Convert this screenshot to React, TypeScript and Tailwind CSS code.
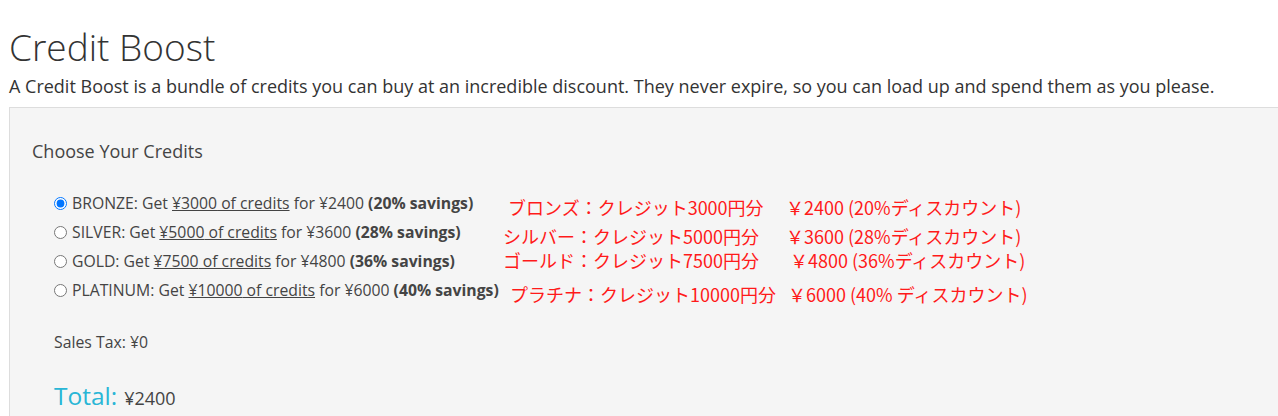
import React from 'react';

const OPTIONS = [
  { id: 'bronze', name: 'BRONZE', credits: '¥3000', price: '¥2400', savings: '20%', checked: true },
  { id: 'silver', name: 'SILVER', credits: '¥5000', price: '¥3600', savings: '28%' },
  { id: 'gold', name: 'GOLD', credits: '¥7500', price: '¥4800', savings: '36%' },
  { id: 'platinum', name: 'PLATINUM', credits: '¥10000', price: '¥6000', savings: '40%' },
];

// red notes drawn over the form
const NOTES = [
  { label: 'ブロンズ：クレジット3000円分', price: '￥2400 (20%ディスカウント)', cls: 'top-[195px] left-[508px]', priceCls: 'left-[786px]' },
  { label: 'シルバー：クレジット5000円分', price: '￥3600 (28%ディスカウント)', cls: 'top-[224px] left-[503px]', priceCls: 'left-[786px]' },
  { label: 'ゴールド：クレジット7500円分', price: '￥4800 (36%ディスカウント)', cls: 'top-[248px] left-[503px]', priceCls: 'left-[790px]' },
  { label: 'プラチナ：クレジット10000円分', price: '￥6000 (40% ディスカウント)', cls: 'top-[282px] left-[510px]', priceCls: 'left-[788px]' },
];

export default function App() {
  return (
    <div className="relative h-[416px] overflow-hidden bg-white font-['Open_Sans',sans-serif] text-[#333]">
      <div className="pl-[9px] pt-[23px]">
        <h1 className="text-[37px] font-light leading-[48px] text-[#333]">Credit Boost</h1>
        <p className="mt-[3px] text-[18px] leading-[24px]">
          A Credit Boost is a bundle of credits you can buy at an incredible discount. They never expire, so you can load up and spend them as you please.
        </p>
        <div className="mt-[9px] w-[1300px] border border-[#ddd] bg-[#f5f5f5] pl-[22px] pt-[30px] pb-[40px]">
          <h2 className="text-[18px] leading-[26px] text-[#444]">Choose Your Credits</h2>
          <div className="mt-[27px] flex flex-col gap-[5px] pl-[22px] text-[15.75px] leading-[24px] text-[#444]">
            {OPTIONS.map((o) => (
              <label key={o.id} className="flex items-center gap-[5px]">
                <input type="radio" name="credits" defaultChecked={o.checked} className="m-0 h-[13px] w-[13px]" />
                <span>
                  {o.name}: Get <span className="underline">{o.credits} of credits</span> for {o.price}{' '}
                  <b>({o.savings} savings)</b>
                </span>
              </label>
            ))}
          </div>
          <p className="mt-[29px] pl-[22px] text-[15.8px] leading-[22px] text-[#444]">Sales Tax: ¥0</p>
          <p className="mt-[27px] flex items-baseline gap-[7px] pl-[22px] leading-[32px]">
            <span className="text-[24.5px] text-[#29b6d6]">Total:</span>
            <span className="text-[18px] text-[#444]">¥2400</span>
          </p>
        </div>
      </div>

      {NOTES.map((n) => (
        <div key={n.label} className={`absolute ${n.cls} whitespace-nowrap font-['Noto_Sans_CJK_JP',sans-serif] text-[18px] leading-[24px] text-[#ff1a1a]`}>
          {n.label}
        </div>
      ))}
      {NOTES.map((n) => (
        <div
          key={n.price}
          className={`absolute ${n.cls.split(' ')[0]} ${n.priceCls} whitespace-nowrap font-['Noto_Sans_CJK_JP',sans-serif] text-[18px] leading-[24px] text-[#ff1a1a]`}
        >
          {n.price}
        </div>
      ))}
    </div>
  );
}
